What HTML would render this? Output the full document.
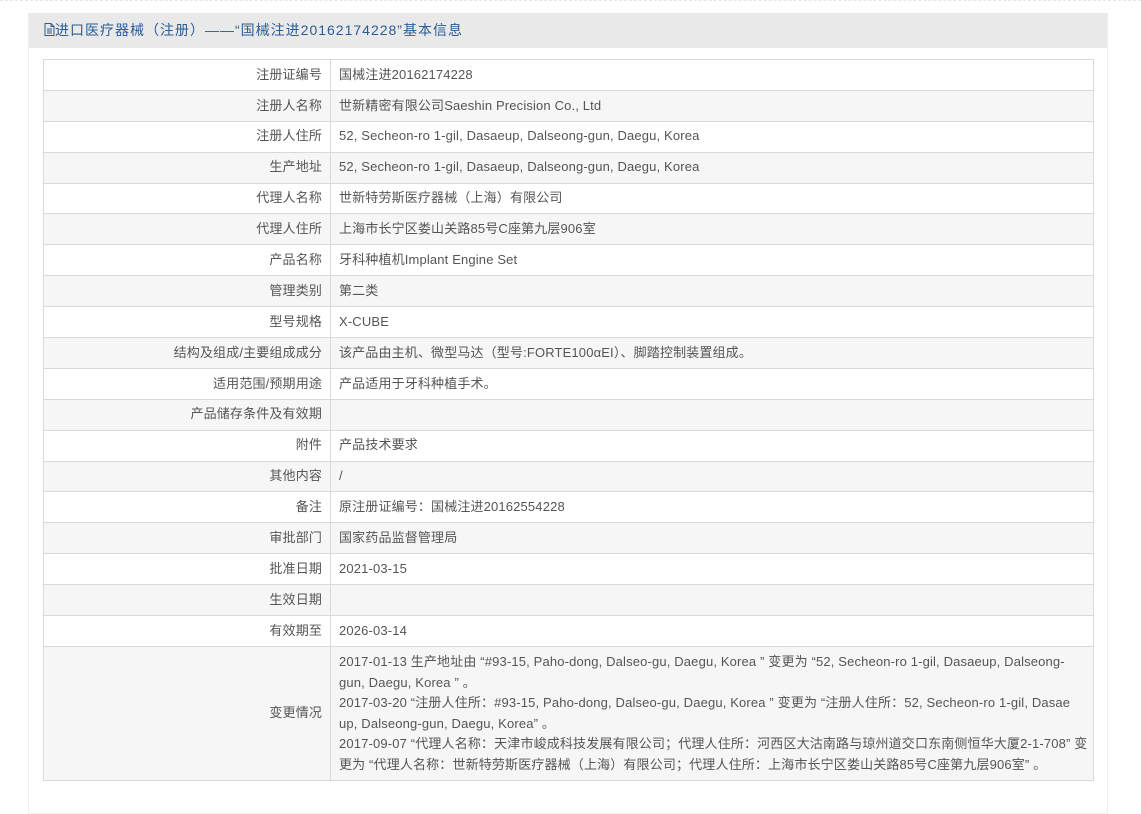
<!DOCTYPE html>
<html><head><meta charset="utf-8"><style>
html,body{margin:0;padding:0;background:#fff;width:1141px;height:769px;overflow:hidden;font-family:"Liberation Sans","Noto Sans CJK SC",sans-serif;font-size:13px;color:#555}
.dash{position:absolute;left:0;top:0;width:1141px;height:2px;border-top:1px dashed #e6e6e6}
.panel{position:absolute;left:28px;top:13px;width:1078px;height:800px;border:1px solid #eee;border-top:none}
.hd{height:35px;background:#e9e9e9;color:#2a5d95;font-size:14px;line-height:35px;padding-left:15px;letter-spacing:1px;white-space:nowrap}
table{position:absolute;left:14px;top:46px;width:1051px;border-collapse:collapse;letter-spacing:0.15px;table-layout:fixed}
td{border:1px solid #d9d9d9;height:29.9px;padding:0 8px;line-height:20.6px}
td.l{width:270px;text-align:right}
tr:nth-child(even) td{background:#f6f6f6}
.nw{white-space:nowrap}
</style></head><body>
<div class="dash"></div>
<div class="panel">
<div class="hd"><svg width="11" height="13" viewBox="0 0 11 13" style="vertical-align:-1px"><path d="M1 .5h6l3 3v9H1z M7 .5v3h3 M3 6h5 M3 8h5 M3 10h5" fill="none" stroke="#2a5d95"/></svg>进口医疗器械（注册）——“国械注进20162174228”基本信息</div>
<table>
<tr><td class="l">注册证编号</td><td>国械注进20162174228</td></tr>
<tr><td class="l">注册人名称</td><td>世新精密有限公司Saeshin Precision Co., Ltd</td></tr>
<tr><td class="l">注册人住所</td><td>52, Secheon-ro 1-gil, Dasaeup, Dalseong-gun, Daegu, Korea</td></tr>
<tr><td class="l">生产地址</td><td>52, Secheon-ro 1-gil, Dasaeup, Dalseong-gun, Daegu, Korea</td></tr>
<tr><td class="l">代理人名称</td><td>世新特劳斯医疗器械（上海）有限公司</td></tr>
<tr><td class="l">代理人住所</td><td>上海市长宁区娄山关路85号C座第九层906室</td></tr>
<tr><td class="l">产品名称</td><td>牙科种植机Implant Engine Set</td></tr>
<tr><td class="l">管理类别</td><td>第二类</td></tr>
<tr><td class="l">型号规格</td><td>X-CUBE</td></tr>
<tr><td class="l">结构及组成/主要组成成分</td><td>该产品由主机、微型马达（型号:FORTE100αEI）、脚踏控制装置组成。</td></tr>
<tr><td class="l">适用范围/预期用途</td><td>产品适用于牙科种植手术。</td></tr>
<tr><td class="l">产品储存条件及有效期</td><td></td></tr>
<tr><td class="l">附件</td><td>产品技术要求</td></tr>
<tr><td class="l">其他内容</td><td>/</td></tr>
<tr><td class="l">备注</td><td>原注册证编号：国械注进20162554228</td></tr>
<tr><td class="l">审批部门</td><td>国家药品监督管理局</td></tr>
<tr><td class="l">批准日期</td><td>2021-03-15</td></tr>
<tr><td class="l">生效日期</td><td></td></tr>
<tr><td class="l">有效期至</td><td>2026-03-14</td></tr>
<tr><td class="l">变更情况</td><td class="nw" style="padding-top:5px;padding-bottom:5px">2017-01-13 生产地址由 “#93-15, Paho-dong, Dalseo-gu, Daegu, Korea ” 变更为 “52, Secheon-ro 1-gil, Dasaeup, Dalseong-<br>gun, Daegu, Korea ” 。<br>2017-03-20 “注册人住所：#93-15, Paho-dong, Dalseo-gu, Daegu, Korea ” 变更为 “注册人住所：52, Secheon-ro 1-gil, Dasae<br>up, Dalseong-gun, Daegu, Korea” 。<br>2017-09-07 “代理人名称：天津市峻成科技发展有限公司；代理人住所：河西区大沽南路与琼州道交口东南侧恒华大厦2-1-708” 变<br>更为 “代理人名称：世新特劳斯医疗器械（上海）有限公司；代理人住所：上海市长宁区娄山关路85号C座第九层906室” 。</td></tr>
</table>
</div>
</body></html>
